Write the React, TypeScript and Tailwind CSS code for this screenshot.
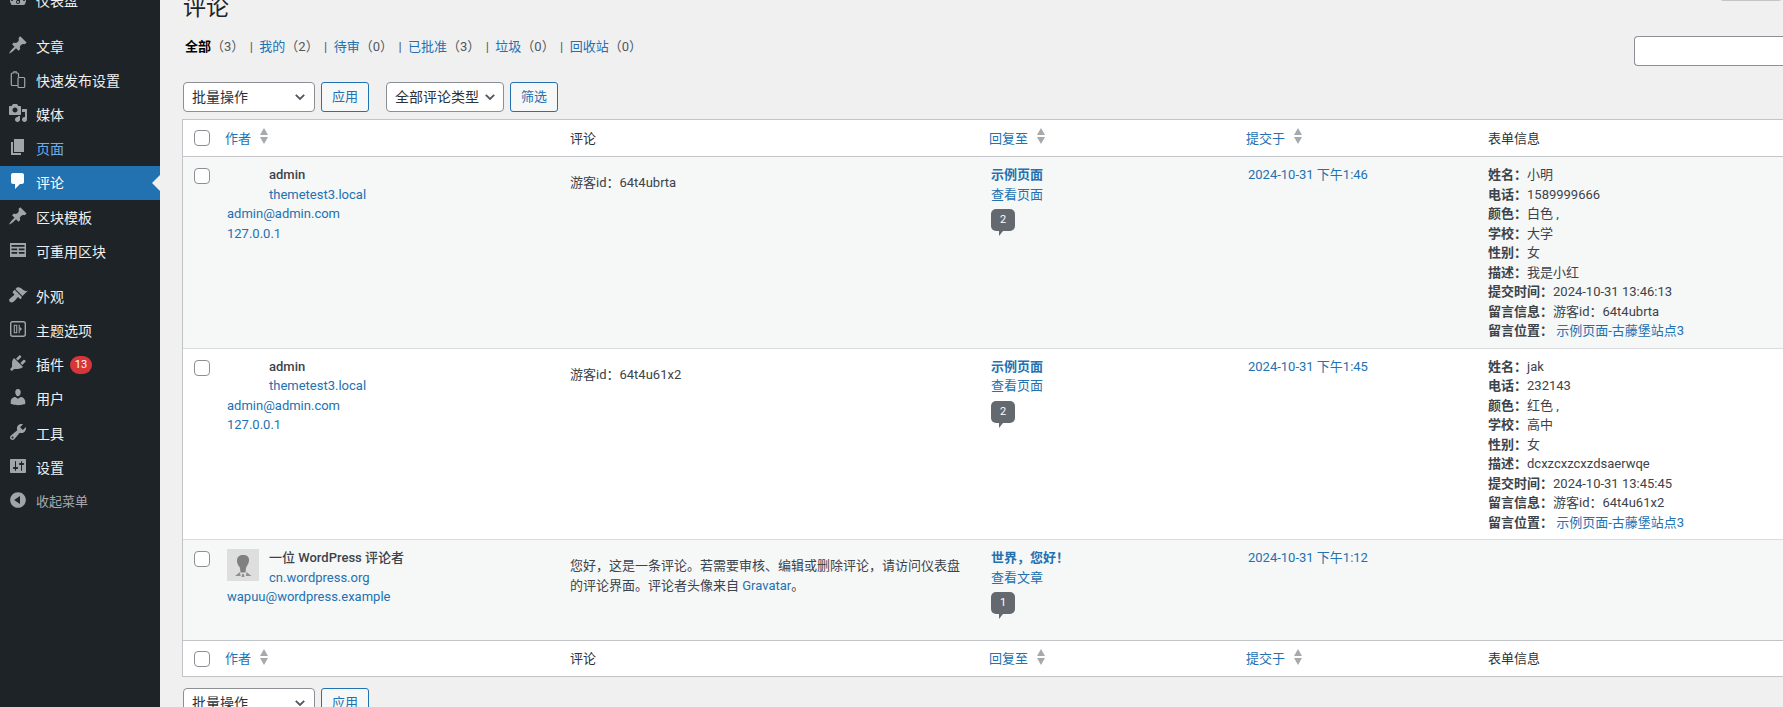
import React from "react";

const font = { fontFamily: 'Roboto, "Noto Sans CJK SC", sans-serif' };

const paths: Record<string, string> = {
  dashboard: "M3.76 16h12.48c1.1-1.37 1.76-3.11 1.76-5 0-4.42-3.58-8-8-8s-8 3.58-8 8c0 1.89.66 3.63 1.76 5zM10 4c.55 0 1 .45 1 1s-.45 1-1 1-1-.45-1-1 .45-1 1-1zM6 6c.55 0 1 .45 1 1s-.45 1-1 1-1-.45-1-1 .45-1 1-1zm8 0c.55 0 1 .45 1 1s-.45 1-1 1-1-.45-1-1 .45-1 1-1zm-5.37 5.55L12 7v6c0 1.1-.9 2-2 2s-2-.9-2-2c0-.57.24-1.08.63-1.45zM4 10c.55 0 1 .45 1 1s-.45 1-1 1-1-.45-1-1 .45-1 1-1zm12 0c.55 0 1 .45 1 1s-.45 1-1 1-1-.45-1-1 .45-1 1-1zm-5 3c0-.55-.45-1-1-1s-1 .45-1 1 .45 1 1 1 1-.45 1-1z",
  post: "M10.44 3.02l1.82-1.82 6.36 6.35-1.83 1.82c-1.05-.68-2.48-.57-3.41.36l-.75.75c-.92.93-1.04 2.35-.35 3.41l-1.83 1.82-2.41-2.41-2.8 2.79c-.42.42-3.38 2.71-3.8 2.29s1.86-3.39 2.28-3.81l2.79-2.79L4.1 9.36l1.83-1.82c1.05.69 2.48.57 3.4-.36l.75-.75c.93-.92 1.05-2.35.36-3.41z",
  media: "M13 11V4c0-.55-.45-1-1-1h-1.67L9 1H5L3.67 3H2c-.55 0-1 .45-1 1v7c0 .55.45 1 1 1h10c.55 0 1-.45 1-1zM7 4.5c1.38 0 2.5 1.12 2.5 2.5S8.38 9.5 7 9.5 4.5 8.38 4.5 7 5.62 4.5 7 4.5zM14 6h5v10.5c0 1.38-1.12 2.5-2.5 2.5S14 17.88 14 16.5s1.12-2.5 2.5-2.5c.17 0 .34.02.5.05V9h-3V6zm-4 8.05V13h2v3.5c0 1.38-1.12 2.5-2.5 2.5S7 17.88 7 16.5 8.12 14 9.5 14c.17 0 .34.02.5.05z",
  page: "M6 15V2h10v13H6zm-1 1h8v2H3V5h2v11z",
  comments: "M5 2h9c1.1 0 2 .9 2 2v7c0 1.1-.9 2-2 2h-2l-5 5v-5H5c-1.1 0-2-.9-2-2V4c0-1.1.9-2 2-2z",
  appearance: "M14.48 11.06L7.41 3.99l1.5-1.5c.5-.56 2.3-.47 3.51.32 1.21.8 1.43 1.28 2.91 2.1 1.18.64 2.45 1.26 4.45.85zm-.71.71L6.7 4.7 4.93 6.47c-.39.39-.39 1.02 0 1.41l1.06 1.06c.39.39.39 1.03 0 1.42-.6.6-1.43 1.11-2.21 1.69-.35.26-.7.53-1.01.84C1.43 13.23.5 15.44 1.85 16.8c1.36 1.35 3.57.42 4.93-.93.31-.31.58-.66.84-1.01.58-.78 1.09-1.61 1.69-2.21.39-.39 1.03-.39 1.42 0l1.06 1.06c.39.39 1.02.39 1.41 0z",
  plugins: "M13.11 4.36L9.87 7.6 8 5.73l3.24-3.24c.35-.34 1.05-.2 1.56.32.52.51.66 1.21.31 1.55zm-8 1.77l.91-1.12 9.01 9.01-1.19.84c-.71.71-2.63 1.16-3.82 1.16H6.14L4.9 17.26c-.59.59-1.54.59-2.12 0-.59-.58-.59-1.53 0-2.12l1.24-1.24v-3.88c0-1.13.4-3.19 1.09-3.89zm7.26 3.97l3.24-3.24c.34-.35 1.04-.21 1.55.31.52.51.66 1.21.31 1.55l-3.24 3.25z",
  users: "M10 9.25c-2.27 0-2.73-3.44-2.73-3.44C7 4.02 7.82 2 9.97 2c2.16 0 2.98 2.02 2.71 3.81 0 0-.41 3.44-2.68 3.44zm0 2.57L12.72 10c2.39 0 4.52 2.33 4.52 4.53v2.49s-3.65 1.13-7.24 1.13c-3.65 0-7.24-1.13-7.24-1.13v-2.49c0-2.25 1.94-4.48 4.47-4.48z",
  tools: "M16.68 9.77c-1.34 1.34-3.3 1.67-4.95.99l-5.41 6.52c-.99.99-2.59.99-3.58 0s-.99-2.59 0-3.57l6.52-5.42c-.68-1.65-.35-3.61.99-4.95 1.28-1.28 3.12-1.62 4.72-1.06l-2.89 2.89 2.82 2.82 2.86-2.87c.53 1.58.18 3.39-1.08 4.65zM3.81 16.21c.4.39 1.04.39 1.43 0 .4-.4.4-1.04 0-1.43-.39-.4-1.03-.4-1.43 0-.39.39-.39 1.03 0 1.43z",
  settings: "M18 16V4c0-.55-.45-1-1-1H3c-.55 0-1 .45-1 1v12c0 .55.45 1 1 1h14c.55 0 1-.45 1-1zM8 11h1c.55 0 1 .45 1 1s-.45 1-1 1H8v1.5c0 .28-.22.5-.5.5s-.5-.22-.5-.5V13H6c-.55 0-1-.45-1-1s.45-1 1-1h1V5.5c0-.28.22-.5.5-.5s.5.22.5.5V11zm5-2h-1c-.55 0-1-.45-1-1s.45-1 1-1h1V5.5c0-.28.22-.5.5-.5s.5.22.5.5V7h1c.55 0 1 .45 1 1s-.45 1-1 1h-1v5.5c0 .28-.22.5-.5.5s-.5-.22-.5-.5V9z",
  collapse: "M10 2.16c4.33 0 7.84 3.51 7.84 7.84s-3.51 7.84-7.84 7.84S2.16 14.33 2.16 10 5.71 2.16 10 2.16zm2 11.72V6.12L6.18 9.97z",
  table: "M2 3h16v14H2zM3.500 5h13v1.700h-13zM3.500 8.500h5.700v1.700H3.500zM10.800 8.500h5.700v1.700h-5.700zM3.500 12h5.700v1.700H3.500zM10.800 12h5.700v1.700h-5.700z",
};

function MenuIcon({ name, className }: { name: string; className: string }) {
  if (name === "devices") {
    return (
      <svg viewBox="0 0 20 20" className={className} fill="none" stroke="currentColor" strokeWidth="1.2">
        <path d="M9.800 16.500H4.300a1 1 0 0 1-1-1V5a1 1 0 0 1 1-1h1.500V2.800h2.400V4h1.300a1 1 0 0 1 1 1v3" />
        <rect x="10" y="8.500" width="6.700" height="10" rx="1" />
      </svg>
    );
  }
  if (name === "options") {
    return (
      <svg viewBox="0 0 20 20" className={className} fill="none" stroke="currentColor">
        <rect x="2.700" y="2.700" width="14.600" height="14.600" rx="2" strokeWidth="1.400" />
        <path d="M6.300 6.200h2.400v7.600H6.300zM11.200 5.800v8.400" strokeWidth="1.100" />
        <path d="M11.800 7.800l2.200 2.200-2.200 2.200z" fill="currentColor" stroke="none" />
      </svg>
    );
  }
  return (
    <svg viewBox="0 0 20 20" className={className} fill="currentColor" fillRule="evenodd">
      <path d={paths[name]} />
    </svg>
  );
}

type Item = { icon: string; label: string; state?: string; badge?: string; sep?: boolean };
const menu: Item[] = [
  { icon: "dashboard", label: "仪表盘" },
  { icon: "post", label: "文章", sep: true },
  { icon: "devices", label: "快速发布设置" },
  { icon: "media", label: "媒体" },
  { icon: "page", label: "页面", state: "hover" },
  { icon: "comments", label: "评论", state: "active" },
  { icon: "post", label: "区块模板" },
  { icon: "table", label: "可重用区块" },
  { icon: "appearance", label: "外观", sep: true },
  { icon: "options", label: "主题选项" },
  { icon: "plugins", label: "插件", badge: "13" },
  { icon: "users", label: "用户" },
  { icon: "tools", label: "工具" },
  { icon: "settings", label: "设置" },
  { icon: "collapse", label: "收起菜单", state: "muted" },
];

function Sidebar() {
  return (
    <aside className="w-40 shrink-0 bg-[#1d2327] h-[707px] overflow-hidden">
      <ul className="-mt-[16.2px] flex flex-col">
        {menu.map((m) => {
          const active = m.state === "active";
          return (
            <li key={m.label} className={m.sep ? "mt-[11px]" : ""}>
              <div
                className={
                  "relative flex items-center h-[34.2px] pl-[8px] " +
                  (active ? "bg-[#2271b1] text-white" : "text-[#f0f0f1]")
                }
              >
                <MenuIcon
                  name={m.icon}
                  className={"w-5 h-5 shrink-0 -mt-[3px] " + (active ? "text-white" : "text-[#a0a5aa]")}
                />
                <span
                  className={
                    "ml-2 mt-px leading-[18px] " +
                    (m.state === "muted"
                      ? "text-[13px] text-[#a7aaad]"
                      : m.state === "hover"
                        ? "text-[14px] text-[#72aee6]"
                        : "text-[14px]")
                  }
                >
                  {m.label}
                </span>
                {m.badge && (
                  <span className="ml-[6px] w-[22px] h-[18px] rounded-full bg-[#d63638] text-white text-[11px] leading-[18px] text-center">
                    {m.badge}
                  </span>
                )}
                {active && (
                  <span className="absolute right-0 top-[9px] border-y-[8px] border-y-transparent border-r-[8px] border-r-[#f0f0f1]" />
                )}
              </div>
            </li>
          );
        })}
      </ul>
    </aside>
  );
}

function Checkbox() {
  return <span className="block w-4 h-4 rounded-[4px] border border-[#8c8f94] bg-white" />;
}

function SortArrows() {
  return (
    <svg viewBox="0 0 8 16" className="w-2 h-4 ml-[8.5px] -mt-[5px] shrink-0" fill="#a7aaad">
      <path d="M4 0l4 7H0zM0 9h8l-4 7z" />
    </svg>
  );
}

function Chevron() {
  return (
    <svg viewBox="0 0 10 6" className="w-[10px] h-[6px]" fill="none" stroke="#50575e" strokeWidth="1.8">
      <path d="M.8.8L5 5l4.200-4.200" />
    </svg>
  );
}

function Select({ label, width, pad }: { label: string; width: string; pad: string }) {
  return (
    <div
      className={
        "h-[30px] flex items-center justify-between pl-2 bg-white border border-[#8c8f94] rounded-[4px] text-[14px] text-[#2c3338] " +
        width +
        " " +
        pad
      }
    >
      <span>{label}</span>
      <Chevron />
    </div>
  );
}

function Btn({ label }: { label: string }) {
  return (
    <button className="w-12 h-[30px] border border-[#2271b1] rounded-[3px] bg-[#f6f7f7] text-[#2271b1] text-[13px]">
      {label}
    </button>
  );
}

function HeaderRow({ foot }: { foot?: boolean }) {
  const cell =
    "align-middle text-left font-normal text-[13px] border-[#c3c4c7] " +
    (foot ? "h-9 border-t" : "h-[37px] border-b");
  const Sort = ({ t }: { t: string }) => (
    <span className="flex items-center pl-2 pt-px text-[#2271b1]">
      {t}
      <SortArrows />
    </span>
  );
  return (
    <tr className="bg-white">
      <th className={cell + " pl-[11px]"}>
        <Checkbox />
      </th>
      <th className={cell}>
        <Sort t="作者" />
      </th>
      <th className={cell + " pl-2.5 pt-px text-[#2c3338]"}>评论</th>
      <th className={cell}>
        <Sort t="回复至" />
      </th>
      <th className={cell}>
        <Sort t="提交于" />
      </th>
      <th className={cell + " pl-2.5 pt-px text-[#2c3338]"}>表单信息</th>
    </tr>
  );
}

function Bubble({ n }: { n: string }) {
  return (
    <span className="relative mt-[5px] block w-6 h-[22px] rounded-[5px] bg-[#646970] text-white text-[11px] leading-[22px] text-center">
      {n}
      <span className="absolute left-2 top-full border-t-[5px] border-t-[#646970] border-r-[4px] border-r-transparent" />
    </span>
  );
}

function Avatar() {
  return (
    <svg viewBox="0 0 32 32" className="w-8 h-8 block">
      <rect width="32" height="32" fill="#dedede" />
      <path d="M16 6c4 0 6.500 1.800 6 6-.4 3.400-2.400 5-3 7l-.5 4.500h-5L13 19c-.6-2-3-3-3-7.500C10 8 12.500 6 16 6z" fill="#808080" />
      <path d="M8 27l5-4 .6 4zM24.500 27l-5-4-.6 4zM15 25h2l.4 3h-2.800z" fill="#909090" />
    </svg>
  );
}

type Row = {
  bg: string;
  name: string;
  url: string;
  mail: string;
  ip?: string;
  avatar?: boolean;
  comment: React.ReactNode;
  target: string;
  view: string;
  count: string;
  date: string;
  info?: [string, string][];
  where?: string;
  last?: boolean;
};

const rows: Row[] = [
  {
    bg: "bg-[#f6f7f7]",
    name: "admin",
    url: "themetest3.local",
    mail: "admin@admin.com",
    ip: "127.0.0.1",
    comment: "游客id：64t4ubrta",
    target: "示例页面",
    view: "查看页面",
    count: "2",
    date: "2024-10-31 下午1:46",
    info: [
      ["姓名：", "小明"],
      ["电话：", "1589999666"],
      ["颜色：", "白色 ,"],
      ["学校：", "大学"],
      ["性别：", "女"],
      ["描述：", "我是小红"],
      ["提交时间：", "2024-10-31 13:46:13"],
      ["留言信息：", "游客id：64t4ubrta"],
    ],
    where: "示例页面-古藤堡站点3",
  },
  {
    bg: "bg-white",
    name: "admin",
    url: "themetest3.local",
    mail: "admin@admin.com",
    ip: "127.0.0.1",
    comment: "游客id：64t4u61x2",
    target: "示例页面",
    view: "查看页面",
    count: "2",
    date: "2024-10-31 下午1:45",
    info: [
      ["姓名：", "jak"],
      ["电话：", "232143"],
      ["颜色：", "红色 ,"],
      ["学校：", "高中"],
      ["性别：", "女"],
      ["描述：", "dcxzcxzcxzdsaerwqe"],
      ["提交时间：", "2024-10-31 13:45:45"],
      ["留言信息：", "游客id：64t4u61x2"],
    ],
    where: "示例页面-古藤堡站点3",
  },
  {
    bg: "bg-[#f6f7f7]",
    last: true,
    avatar: true,
    name: "一位 WordPress 评论者",
    url: "cn.wordpress.org",
    mail: "wapuu@wordpress.example",
    comment: (
      <>
        您好，这是一条评论。若需要审核、编辑或删除评论，请访问仪表盘的评论界面。评论者头像来自 <a className="text-[#2271b1]">Gravatar</a>。
      </>
    ),
    target: "世界，您好！",
    view: "查看文章",
    count: "1",
    date: "2024-10-31 下午1:12",
  },
];

function CommentRow({ r }: { r: Row }) {
  const td = "align-top pt-2 " + (r.last ? "h-[100px] pb-2 " : "pb-[7px] border-b border-[#dcdcde] ");
  return (
    <tr className={r.bg + " text-[13px] leading-[19.5px] text-[#3c434a]"}>
      <td className={td + "pl-[11px]"}>
        <span className="block mt-[3px]">
          <Checkbox />
        </span>
      </td>
      <td className={td + "pl-2.5"}>
        <div className="flex h-[39px]">
          <div className="w-8 shrink-0 mt-px">{r.avatar && <Avatar />}</div>
          <div className="ml-2.5">
            <div className="font-medium">{r.name}</div>
            <div className="text-[#2271b1]">{r.url}</div>
          </div>
        </div>
        <div className="text-[#2271b1]">{r.mail}</div>
        {r.ip && <div className="text-[#2271b1]">{r.ip}</div>}
      </td>
      <td className={td + "px-2.5"}>
        <p className="mt-2">{r.comment}</p>
      </td>
      <td className={td + "pl-2.5"}>
        <div className="font-semibold text-[#2271b1]">{r.target}</div>
        <div className="text-[#2271b1]">{r.view}</div>
        <Bubble n={r.count} />
      </td>
      <td className={td + "pl-2.5 text-[#2271b1]"}>{r.date}</td>
      <td className={td + "pl-2.5"}>
        {r.info?.map(([k, v]) => (
          <div key={k}>
            <b className="font-semibold">{k}</b>
            {v}
          </div>
        ))}
        {r.where && (
          <div>
            <b className="font-semibold">留言位置：</b> <a className="text-[#2271b1]">{r.where}</a>
          </div>
        )}
      </td>
    </tr>
  );
}

const filters: [string, string, boolean?][] = [
  ["全部", "（3）", true],
  ["我的", "（2）"],
  ["待审", "（0）"],
  ["已批准", "（3）"],
  ["垃圾", "（0）"],
  ["回收站", "（0）"],
];

export default function App() {
  return (
    <div className="flex h-[707px] w-[1783px] overflow-hidden bg-[#f0f0f1]" style={font}>
      <Sidebar />
      <main className="flex-1 min-w-0 pl-[22px] -mt-[7px] text-[13px] text-[#3c434a]">
        <div className="flex justify-between items-start h-[30px]">
          <h1 className="text-[23px] leading-[30px] text-[#1d2327] pl-px">评论</h1>
          <div className="w-16 h-2 bg-white border border-[#c3c4c7] rounded-b-[4px]" />
        </div>
        <div className="mt-[13px] flex justify-between items-start h-[30px]">
          <ul className="flex pl-[3px] pt-px leading-[19.5px] text-[#50575e] whitespace-pre">
            {filters.map(([a, c, cur], i) => (
              <li key={a} className="pr-[1px]">
                <a className={cur ? "font-semibold text-black" : "text-[#2271b1]"}>{a}</a>
                {c}
                {i < filters.length - 1 ? <span className="px-[2.2px]"> | </span> : null}
              </li>
            ))}
          </ul>
          <div className="w-[149px] h-[30px] bg-white border border-[#8c8f94] border-r-0 rounded-l-[4px]" />
        </div>
        <div className="mt-4 flex items-center pl-px">
          <Select label="批量操作" width="w-[132px]" pad="pr-[9px]" />
          <span className="ml-[6px]">
            <Btn label="应用" />
          </span>
          <span className="ml-[17px]">
            <Select label="全部评论类型" width="w-[118px]" pad="pr-[8px]" />
          </span>
          <span className="ml-[6px]">
            <Btn label="筛选" />
          </span>
        </div>
        <table className="mt-[7px] w-[1720px] max-w-none table-fixed border-separate border-spacing-0 border border-[#c3c4c7] bg-white">
          <colgroup>
            <col className="w-[34px]" />
            <col className="w-[343px]" />
            <col className="w-[421px]" />
            <col className="w-[257px]" />
            <col className="w-[240px]" />
            <col />
          </colgroup>
          <thead>
            <HeaderRow />
          </thead>
          <tbody>
            {rows.map((r) => (
              <CommentRow key={r.date} r={r} />
            ))}
          </tbody>
          <tfoot>
            <HeaderRow foot />
          </tfoot>
        </table>
        <div className="mt-[11px] flex items-center pl-px">
          <Select label="批量操作" width="w-[132px]" pad="pr-[9px]" />
          <span className="ml-[6px]">
            <Btn label="应用" />
          </span>
        </div>
      </main>
    </div>
  );
}
